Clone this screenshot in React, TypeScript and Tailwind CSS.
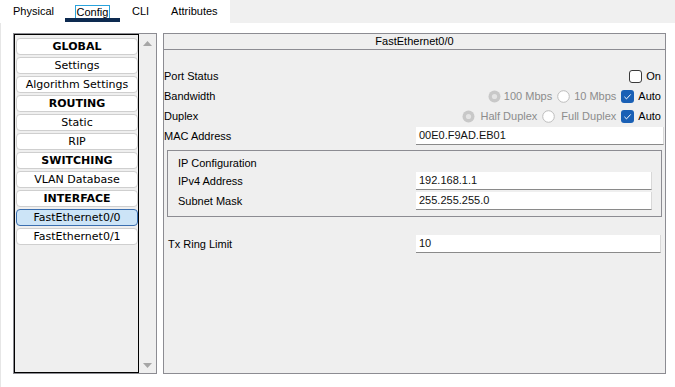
import React from 'react';

const listItems = [
  { label: 'GLOBAL', bold: true },
  { label: 'Settings' },
  { label: 'Algorithm Settings' },
  { label: 'ROUTING', bold: true },
  { label: 'Static' },
  { label: 'RIP' },
  { label: 'SWITCHING', bold: true },
  { label: 'VLAN Database' },
  { label: 'INTERFACE', bold: true },
  { label: 'FastEthernet0/0', selected: true },
  { label: 'FastEthernet0/1' },
];

const Radio = ({ checked }: { checked?: boolean }) => (
  <svg width="13" height="13" viewBox="0 0 13 13" className="shrink-0">
    {checked ? (
      <>
        <circle cx="6.5" cy="6.5" r="6" fill="#c8c8c8" />
        <circle cx="6.5" cy="6.5" r="2.6" fill="#e4e4e4" />
      </>
    ) : (
      <circle cx="6.5" cy="6.5" r="5.8" fill="#ffffff" stroke="#bdbdbd" strokeWidth="1" />
    )}
  </svg>
);

const Checkbox = ({ checked }: { checked?: boolean }) => (
  <svg width="13" height="13" viewBox="0 0 13 13" className="shrink-0">
    {checked ? (
      <>
        <rect x="0" y="0" width="13" height="13" rx="3" fill="#1a60b5" />
        <path d="M3.4 6.8 L5.5 8.9 L9.7 4.4" fill="none" stroke="#ffffff" strokeWidth="1" />
      </>
    ) : (
      <rect x="0.5" y="0.5" width="12" height="12" rx="2.5" fill="#ffffff" stroke="#3a3a3a" strokeWidth="1" />
    )}
  </svg>
);

const Field = ({ value, className }: { value: string; className: string }) => (
  <div className={`h-[18px] bg-white border-b border-r border-b-[#8a8a8a] border-r-[#d8d8d8] flex items-center pl-[3px] text-[#111] ${className}`}>
    {value}
  </div>
);

export default function App() {
  return (
    <div className="w-[675px] h-[387px] overflow-hidden bg-white font-['Liberation_Sans',Arial,sans-serif] text-[11px] text-black">
      {/* Tabs */}
      <div className="flex h-[23px]">
        <div className="w-[230px] h-full bg-white flex items-center">
          <span className="ml-[13px]">Physical</span>
          <div className="relative ml-[11px] w-[55px] h-full flex items-center justify-center">
            <span className="border border-[#2aa3dc] px-[1px] leading-[12px]">Config</span>
            <div className="absolute left-0 right-0 bottom-[1px] h-[4px] bg-[#0d2a50]" />
          </div>
          <span className="ml-[12px]">CLI</span>
          <span className="ml-[22px]">Attributes</span>
        </div>
        <div className="flex-1 bg-[#f0f0f0]" />
      </div>

      {/* Content */}
      <div className="flex h-[364px] pt-[10px] pl-[12px] gap-[6px] border-l border-[#e6e6e6]">
        {/* Left list */}
        <div className="w-[144px] h-[341px] border border-[#8c8c92] flex bg-[#efefef]">
          <div className="w-[125px] h-full border border-black bg-[#efefef] pt-[3px] pl-[1px] flex flex-col gap-[2px] font-['DejaVu_Sans',Verdana,sans-serif]">
            {listItems.map((item) => (
              <div
                key={item.label}
                className={`h-[17px] w-[122px] rounded-[4px] border flex items-center justify-center leading-none ${
                  item.selected ? 'bg-[#cce4f7] border-[#3b6fb0]' : 'bg-white border-[#cfcfcf]'
                } ${item.bold ? 'font-bold' : ''}`}
              >
                {item.label}
              </div>
            ))}
          </div>
          <div className="flex-1 flex flex-col items-center justify-between pt-[7px] pb-[5px]">
            <svg width="9" height="5" viewBox="0 0 9 5">
              <path d="M0 5 L4.5 0 L9 5 Z" fill="#a6a6a6" />
            </svg>
            <svg width="9" height="5" viewBox="0 0 9 5">
              <path d="M0 0 L9 0 L4.5 5 Z" fill="#a6a6a6" />
            </svg>
          </div>
        </div>

        {/* Right panel */}
        <div className="w-[503px] h-[341px] border border-[#8c8c92] bg-[#efefef] flex flex-col">
          <div className="h-[16px] border-b border-[#8c8c92] flex items-center justify-center">
            FastEthernet0/0
          </div>

          <div className="pt-[16px] flex flex-col">
            <div className="h-[20px] flex items-center justify-between pr-[4px]">
              <span>Port Status</span>
              <div className="flex items-center gap-[4px]">
                <Checkbox />
                <span>On</span>
              </div>
            </div>

            <div className="h-[20px] flex items-center justify-between pr-[4px]">
              <span>Bandwidth</span>
              <div className="flex items-center">
                <Radio checked />
                <span className="ml-[3px] text-[#8c8c8c]">100 Mbps</span>
                <span className="ml-[5px]"><Radio /></span>
                <span className="ml-[4px] text-[#8c8c8c]">10 Mbps</span>
                <span className="ml-[5px] flex"><Checkbox checked /></span>
                <span className="ml-[4px]">Auto</span>
              </div>
            </div>

            <div className="h-[20px] flex items-center justify-between pr-[4px]">
              <span>Duplex</span>
              <div className="flex items-center">
                <Radio checked />
                <span className="ml-[5px] text-[#8c8c8c]">Half Duplex</span>
                <span className="ml-[5px]"><Radio /></span>
                <span className="ml-[6px] text-[#8c8c8c]">Full Duplex</span>
                <span className="ml-[5px] flex"><Checkbox checked /></span>
                <span className="ml-[4px]">Auto</span>
              </div>
            </div>

            <div className="h-[20px] flex items-center pr-[1px]">
              <span className="w-[252px]">MAC Address</span>
              <Field value="00E0.F9AD.EB01" className="flex-1" />
            </div>

            {/* IP Configuration group */}
            <div className="mt-[4px] mx-[3px] border border-[#8c8c92] pt-[5px] pb-[5px] pl-[10px] pr-[9px]">
              <div className="h-[15px] flex items-center">IP Configuration</div>
              <div className="h-[20px] flex items-center">
                <span className="w-[238px]">IPv4 Address</span>
                <Field value="192.168.1.1" className="flex-1" />
              </div>
              <div className="h-[20px] flex items-center">
                <span className="w-[238px]">Subnet Mask</span>
                <Field value="255.255.255.0" className="flex-1" />
              </div>
            </div>

            <div className="mt-[17px] h-[20px] flex items-center pl-[4px] pr-[4px]">
              <span className="w-[248px]">Tx Ring Limit</span>
              <Field value="10" className="flex-1" />
            </div>
          </div>
        </div>
      </div>
    </div>
  );
}
